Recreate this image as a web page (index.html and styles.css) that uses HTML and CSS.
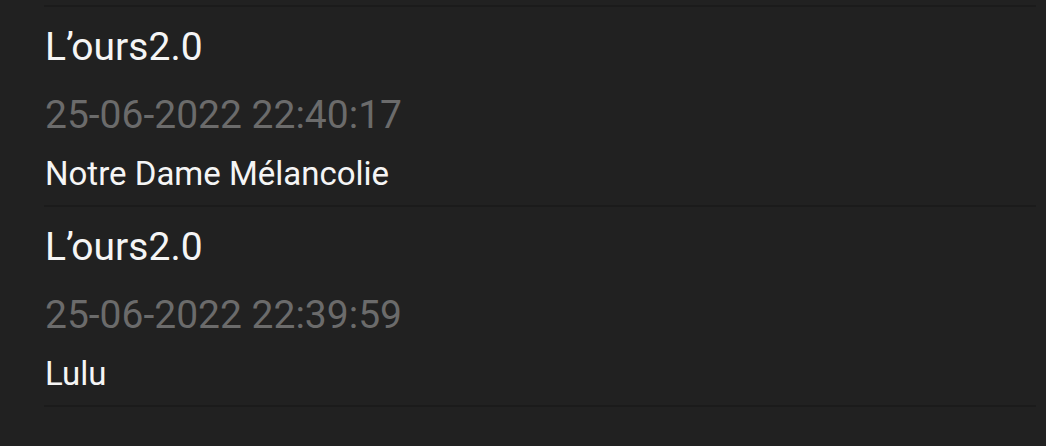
FILE: index.html
```html
<!DOCTYPE html>
<html>
<head>
<meta charset="utf-8">
<link rel="stylesheet" href="styles.css">
</head>
<body>
<div class="list">
  <div class="item stub"></div>
  <div class="item">
    <div class="title">L’ours2.0</div>
    <div class="date">25-06-2022 22:40:17</div>
    <div class="name">Notre Dame Mélancolie</div>
  </div>
  <div class="item">
    <div class="title">L’ours2.0</div>
    <div class="date">25-06-2022 22:39:59</div>
    <div class="name">Lulu</div>
  </div>
</div>
</body>
</html>
```
FILE: styles.css
```css
html, body {
  margin: 0;
  padding: 0;
  background: #212121;
  height: 100%;
  overflow: hidden;
}
body {
  font-family: Roboto, "Liberation Sans", sans-serif;
}
.list {
  display: flex;
  flex-direction: column;
  margin: 0 10px 0 44px;
}
.item {
  display: flex;
  flex-direction: column;
  border-bottom: 2px solid #1b1b1b;
  padding: 16px 0 0 1px;
  height: 200px;
  box-sizing: border-box;
  flex-shrink: 0;
}
.item.stub {
  height: 7px;
  padding: 0;
}
.title {
  font-size: 39px;
  line-height: 48px;
  color: #f5f5f5;
}
.date {
  margin-top: 16px;
  font-size: 39px;
  line-height: 56px;
  color: #6b6b6b;
}
.name {
  margin-top: 11px;
  font-size: 33px;
  line-height: 40px;
  color: #f5f5f5;
}
```
